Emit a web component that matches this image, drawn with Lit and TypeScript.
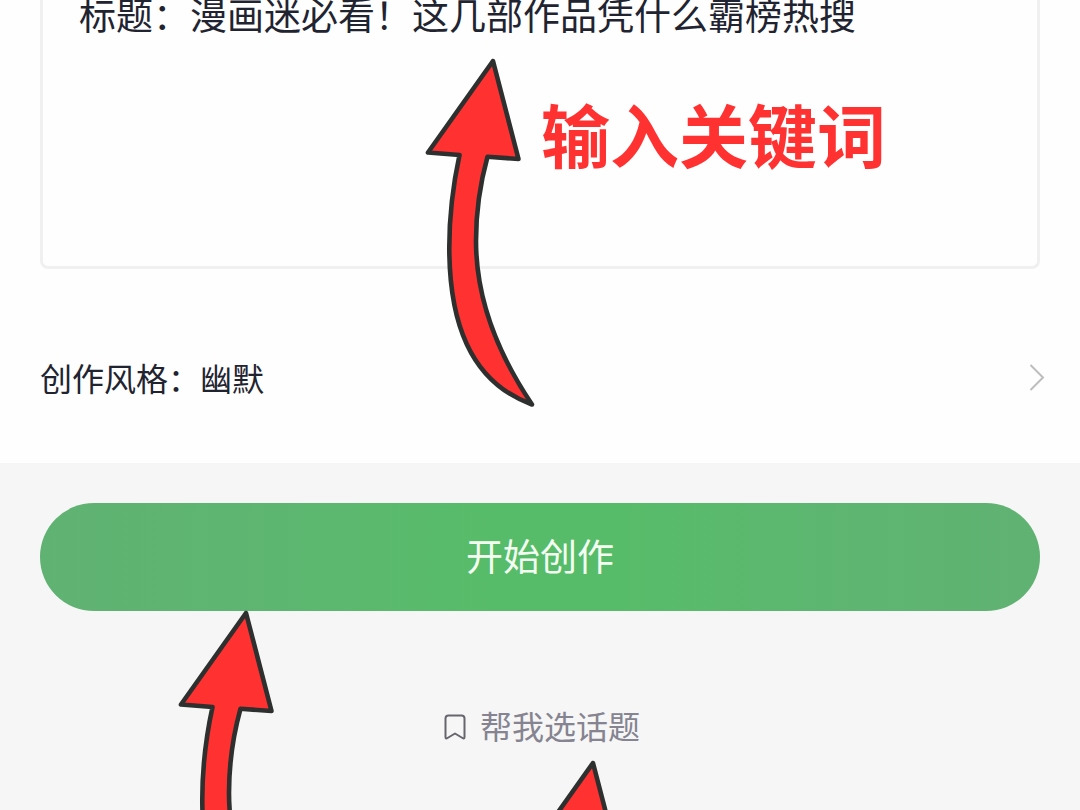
import { LitElement, html, css } from "lit";
import { customElement, state } from "lit/decorators.js";

@customElement("guide-arrow")
export class GuideArrow extends LitElement {
  static styles = css`
    :host {
      display: block;
      width: 112px;
      height: 352px;
    }
    .shape {
      display: block;
      fill: #ff3131;
      stroke: #2e302f;
      stroke-width: 4.6;
      stroke-linejoin: round;
    }
  `;

  render() {
    return html`
      <svg class="shape" width="112" height="352" viewBox="0 0 112 352" aria-hidden="true">
        <path
          d="M69 4 L4 95.5 L35.5 98 C29 128 25 160 25.3 194 C26 262 44 324 108 347.5 C76 300 52 245 52 184 C52 154 56 127 63.5 99.7 L94.5 102 Z"
        />
      </svg>
    `;
  }
}

@customElement("app-root")
export class AppRoot extends LitElement {
  static styles = css`
    :host {
      display: flex;
      flex-direction: column;
      position: relative;
      height: 100vh;
      overflow: hidden;
      background: #f6f6f6;
      color: #1f2430;
      font-family: "Noto Sans CJK SC", sans-serif;
      font-size: 32px;
      line-height: 48px;
    }
    .form {
      display: flex;
      flex-direction: column;
      gap: 54px;
      padding: 0 40px 32px;
      background: #fefefe;
    }
    .topic {
      display: block;
      box-sizing: border-box;
      width: 100%;
      height: 269px;
      margin: 0;
      padding: 0 36px;
      border: 3px solid #f0f0f1;
      border-top: 0;
      border-radius: 0 0 8px 8px;
      outline: 0;
      resize: none;
      overflow: hidden;
      background: #fefefe;
      color: inherit;
      font: inherit;
      font-size: 37px;
      line-height: 28px;
    }
    .style-row {
      display: flex;
      align-items: center;
      justify-content: space-between;
      width: 100%;
      padding: 30px 0;
      border: 0;
      background: none;
      color: inherit;
      font: inherit;
      text-align: left;
    }
    .chevron {
      flex: none;
      margin-right: -8px;
      fill: none;
      stroke: #bdbdbd;
      stroke-width: 2;
    }
    .actions {
      display: flex;
      flex-direction: column;
      align-items: center;
      gap: 90px;
      padding: 40px;
    }
    .start {
      width: 100%;
      height: 108px;
      padding: 0 0 4px;
      border: 0;
      border-radius: 54px;
      background: linear-gradient(90deg, #60b272, #5eb571 20%, #57bc6a 45%, #57bc6a 58%, #5eb571 82%, #60b272);
      color: #f4fff2;
      font: inherit;
      font-size: 37px;
    }
    .pick {
      display: flex;
      align-items: center;
      gap: 14px;
      padding-left: 4px;
      color: #858490;
      text-decoration: none;
    }
    .bookmark {
      margin-top: 4px;
      fill: none;
      stroke: #66666c;
      stroke-width: 2;
      stroke-linejoin: round;
    }
    .note {
      position: absolute;
      top: 81px;
      left: 541px;
      margin: 0;
      color: #ff3131;
      font-size: 69px;
      font-weight: 700;
      line-height: 104px;
      white-space: nowrap;
      pointer-events: none;
    }
    .arrow {
      position: absolute;
      pointer-events: none;
    }
    .to-topic {
      top: 57px;
      left: 424px;
    }
    .to-start {
      top: 609px;
      left: 177px;
    }
    .to-pick {
      top: 759px;
      left: 524px;
    }
  `;

  @state() private topic = "标题：漫画迷必看！这几部作品凭什么霸榜热搜";
  @state() private tone = "幽默";

  private onInput(e: Event) {
    this.topic = (e.target as HTMLTextAreaElement).value;
  }

  render() {
    return html`
      <section class="form">
        <textarea
          class="topic"
          aria-label="标题"
          spellcheck="false"
          .value=${this.topic}
          @input=${this.onInput}
        ></textarea>
        <button class="style-row" type="button">
          <span>创作风格：${this.tone}</span>
          <svg class="chevron" width="20" height="28" viewBox="0 0 20 28" aria-hidden="true">
            <path d="M2.500 2 L15 14.500 L2.500 27" />
          </svg>
        </button>
      </section>
      <section class="actions">
        <button class="start" type="button">开始创作</button>
        <a class="pick" href="#topics">
          <svg class="bookmark" width="22" height="26" viewBox="0 0 22 26" aria-hidden="true">
            <path
              d="M4.500 1.500 H17.500 Q20.500 1.500 20.500 4.500 V23 Q20.500 25.200 18.500 24 L11 19.500 L3.500 24 Q1.500 25.200 1.500 23 V4.500 Q1.500 1.500 4.500 1.500 Z"
            />
          </svg>
          <span>帮我选话题</span>
        </a>
      </section>
      <p class="note">输入关键词</p>
      <guide-arrow class="arrow to-topic"></guide-arrow>
      <guide-arrow class="arrow to-start"></guide-arrow>
      <guide-arrow class="arrow to-pick"></guide-arrow>
    `;
  }
}
